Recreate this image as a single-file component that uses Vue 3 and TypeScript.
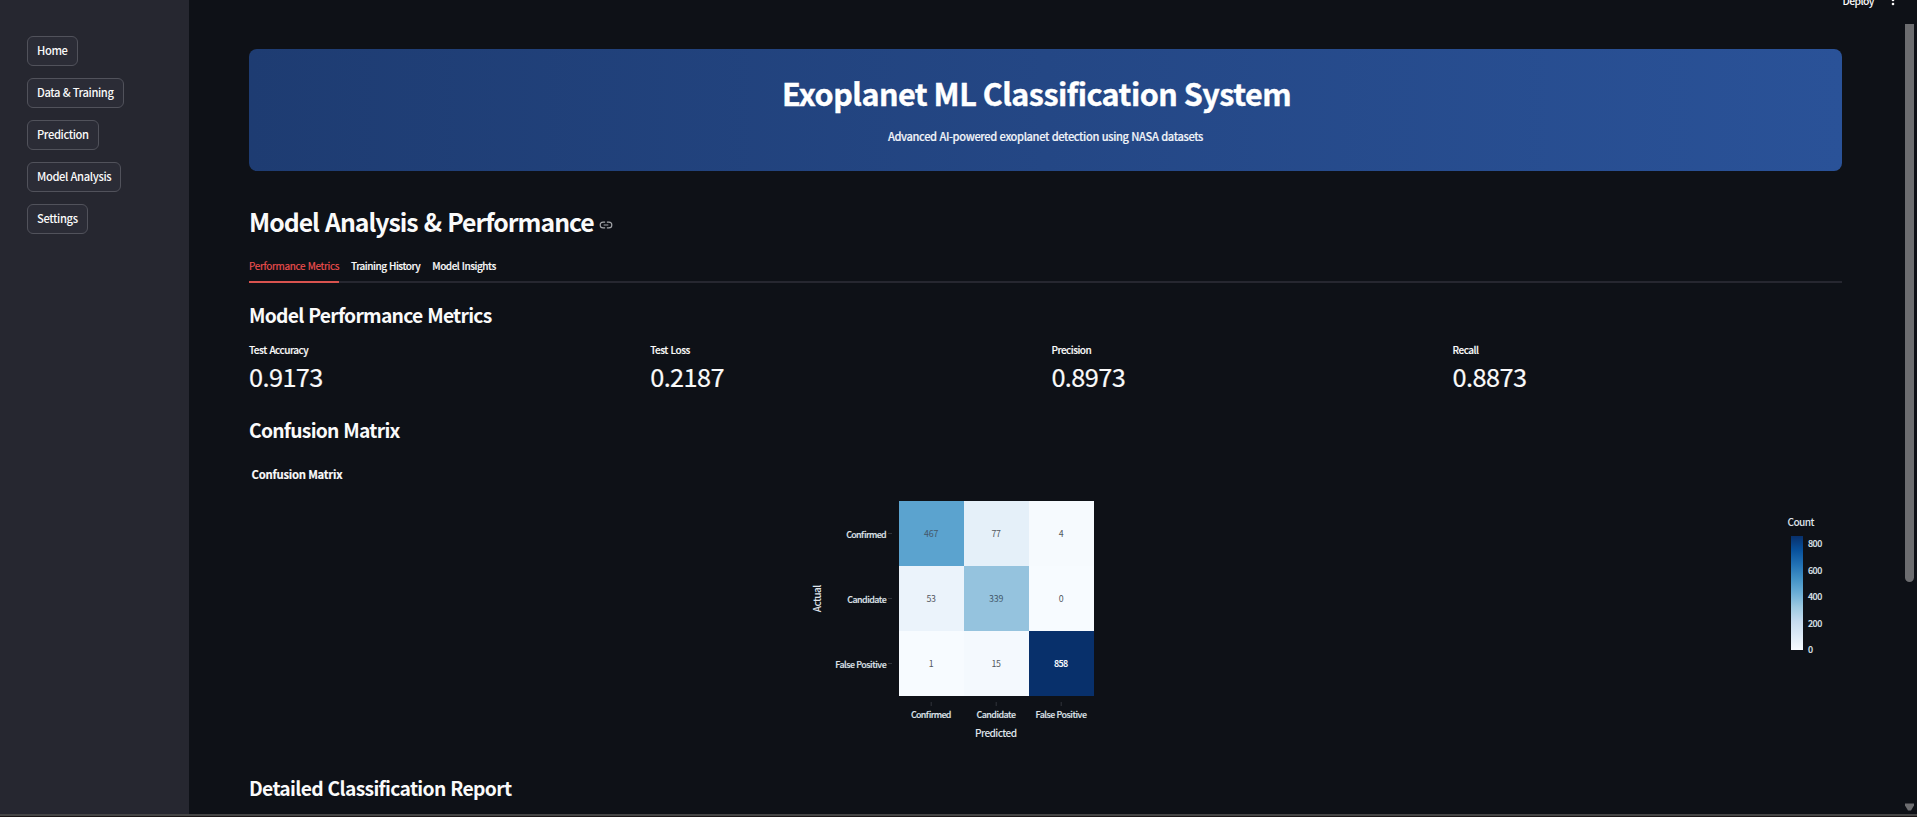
<script setup lang="ts">
interface Metric { label: string; value: string }
interface Cell { value: number; fill: string; ink: string }

const navItems: string[] = ['Home', 'Data & Training', 'Prediction', 'Model Analysis', 'Settings']
const tabs: string[] = ['Performance Metrics', 'Training History', 'Model Insights']

const metrics: Metric[] = [
  { label: 'Test Accuracy', value: '0.9173' },
  { label: 'Test Loss', value: '0.2187' },
  { label: 'Precision', value: '0.8973' },
  { label: 'Recall', value: '0.8873' },
]

const classes = [
  { name: 'Confirmed', width: 40.5 },
  { name: 'Candidate', width: 39.5 },
  { name: 'False Positive', width: 51.5 },
]

const matrix: Cell[][] = [
  [
    { value: 467, fill: '#5ba3cf', ink: '#44586a' },
    { value: 77, fill: '#e5f0f9', ink: '#53585f' },
    { value: 4, fill: '#f6fafe', ink: '#53585f' },
  ],
  [
    { value: 53, fill: '#ebf3fb', ink: '#53585f' },
    { value: 339, fill: '#95c3de', ink: '#44586a' },
    { value: 0, fill: '#f7fbff', ink: '#53585f' },
  ],
  [
    { value: 1, fill: '#f7fbff', ink: '#53585f' },
    { value: 15, fill: '#f4f9fe', ink: '#53585f' },
    { value: 858, fill: '#08306b', ink: '#f2f5fa' },
  ],
]

const blues: string[] = ['#08306b', '#08519c', '#2171b5', '#4292c6', '#6baed6', '#9ecae1', '#c6dbef', '#deebf7', '#f7fbff']
const ticks: number[] = [800, 600, 400, 200, 0]

const left = 898.7
const top = 501
const cell = 65
const center = (i: number): number => (i + 0.5) * cell
const digits = (n: number): number => String(n).length * 4.75
</script>

<template>
  <div class="app">
    <div class="body">
      <aside class="sidebar">
        <button v-for="item in navItems" :key="item" class="nav">{{ item }}</button>
      </aside>

      <main class="main">
        <section class="banner">
          <h1>Exoplanet ML Classification System</h1>
          <p>Advanced AI-powered exoplanet detection using NASA datasets</p>
        </section>

        <div class="heading">
          <h2>Model Analysis &amp; Performance</h2>
          <svg class="link" width="14" height="14" viewBox="0 0 24 24" fill="none" stroke="#a3a5a9" stroke-width="2">
            <path d="M10.500 7H7a5 5 0 0 0 0 10h3.500M13.500 7H17a5 5 0 0 1 0 10h-3.500M8 12h8" />
          </svg>
        </div>

        <nav class="tabs">
          <span v-for="(tab, i) in tabs" :key="tab" class="tab" :class="{ active: i === 0 }">{{ tab }}</span>
        </nav>

        <h3 class="first">Model Performance Metrics</h3>
        <div class="metrics">
          <div v-for="m in metrics" :key="m.label">
            <div class="label">{{ m.label }}</div>
            <div class="value">{{ m.value }}</div>
          </div>
        </div>

        <h3 class="second">Confusion Matrix</h3>
        <svg class="chart" width="1593" height="330" viewBox="249 444 1593 330">
          <defs>
            <linearGradient id="blues" x1="0" y1="0" x2="0" y2="1">
              <stop v-for="(c, i) in blues" :key="c" :offset="i / 8" :stop-color="c" />
            </linearGradient>
          </defs>
          <text class="title" x="251.500" y="479" textLength="91">Confusion Matrix</text>

          <g v-for="(row, r) in matrix" :key="r">
            <g v-for="(c, k) in row" :key="k">
              <rect :x="left + k * cell" :y="top + r * cell" :width="cell" :height="cell" :fill="c.fill" shape-rendering="crispEdges" />
              <text
                class="num" :class="{ strong: c.value === 858 }" :fill="c.ink" text-anchor="middle"
                :x="left + center(k)" :y="top + center(r) + 3.2" :textLength="digits(c.value)"
              >{{ c.value }}</text>
            </g>
          </g>

          <g v-for="(c, i) in classes" :key="c.name">
            <text class="axis" text-anchor="end" x="886.700" :y="top + center(i) + 4.1" :textLength="c.width">{{ c.name }}</text>
            <text class="axis" text-anchor="middle" :x="left + center(i)" y="717.500" :textLength="c.width">{{ c.name }}</text>
            <path class="tick" :d="`M888 ${top + center(i)}h4M${left + center(i)} 702v4`" />
          </g>
          <text class="name" text-anchor="middle" x="996" y="736.500" textLength="42">Predicted</text>
          <text class="name" text-anchor="middle" transform="translate(820.500 598.500) rotate(-90)" textLength="27.500">Actual</text>

          <text class="name" x="1787.500" y="525.500" textLength="27">Count</text>
          <rect x="1791" y="536" width="12" height="114" fill="url(#blues)" />
          <text v-for="(t, i) in ticks" :key="t" class="axis" x="1808" :y="547 + i * 26.5" :textLength="digits(t)">{{ t }}</text>
        </svg>

        <h3 class="report">Detailed Classification Report</h3>
      </main>

      <div class="toolbar">
        <span>Deploy</span>
        <svg width="4" height="12" viewBox="0 0 4 12" fill="#fafafa">
          <circle cx="2" cy="2" r="1.300" /><circle cx="2" cy="6" r="1.300" /><circle cx="2" cy="10" r="1.300" />
        </svg>
      </div>
      <div class="thumb"></div>
      <svg class="arrow" width="10" height="8" viewBox="0 0 10 8"><path d="M0 .5h9v2L6 7.500H3L0 2.500z" fill="#6c6d70" /></svg>
    </div>
    <div class="edge"></div>
  </div>
</template>

<style>
body { background: #0e1117; overflow: hidden; }
</style>

<style scoped>
.app {
  display: flex;
  flex-direction: column;
  width: 1917px;
  height: 817px;
  overflow: hidden;
  background: #0e1117;
  color: #fafafa;
  font-family: "Noto Sans CJK SC", "Noto Sans", sans-serif;
}
.body { position: relative; display: flex; height: 814px; overflow: hidden; }
.sidebar {
  box-sizing: border-box;
  flex: none;
  display: flex;
  flex-direction: column;
  align-items: flex-start;
  gap: 12px;
  width: 189px;
  padding: 36px 27px 0;
  background: #262730;
}
.nav {
  box-sizing: border-box;
  height: 30px;
  padding: 0 9px 2px 9px;
  border: 1px solid #51525b;
  border-radius: 6px;
  background: #2b2c36;
  color: #fafafa;
  font: 500 11.2px/26px "Noto Sans CJK SC", "Noto Sans", sans-serif;
  letter-spacing: -0.38px;
  word-spacing: 0.4px;
  white-space: nowrap;
}
.main { width: 1593px; padding: 49px 0 0 60px; white-space: nowrap; }
h1, h2, h3, p { margin: 0; }
.banner {
  box-sizing: border-box;
  height: 122px;
  padding-top: 24px;
  border-radius: 8px;
  background: linear-gradient(90deg, #1e3c72 0%, #2a5298 100%);
  text-align: center;
}
h1 { padding-right: 18px; font-size: 30.5px; line-height: 40px; letter-spacing: -0.5px; color: #fff; -webkit-text-stroke: 0.4px #fff; }
.banner p { margin-top: 13px; font-size: 11.1px; font-weight: 500; line-height: 20px; letter-spacing: -0.37px; word-spacing: 0.6px; color: #f1f4f9; -webkit-text-stroke: 0.15px #f1f4f9; }
.heading { display: flex; align-items: center; gap: 5px; height: 36px; margin-top: 32px; }
h2 { font-size: 24.8px; line-height: 36px; letter-spacing: -1px; word-spacing: 1.5px; }
.link { margin-top: 7px; }
.tabs {
  box-sizing: border-box;
  display: flex;
  gap: 12px;
  height: 27px;
  margin-top: 17px;
  border-bottom: 2px solid #262730;
}
.tab { height: 25px; font-size: 10px; font-weight: 500; line-height: 20px; letter-spacing: -0.46px; word-spacing: 0.6px; -webkit-text-stroke: 0.15px; }
.tab.active { font-weight: 400; letter-spacing: -0.34px; color: #f0504f; border-bottom: 2px solid #d9534f; }
h3 { font-size: 19.3px; line-height: 28px; letter-spacing: -0.74px; word-spacing: 1px; }
.report { letter-spacing: -0.68px; }
.first { margin-top: 18px; }
.second { margin-top: 23px; }
.metrics { display: grid; grid-template-columns: repeat(4, 389.2px); column-gap: 12px; margin-top: 13px; }
.label { font-size: 10px; font-weight: 500; line-height: 16px; letter-spacing: -0.48px; word-spacing: 1px; -webkit-text-stroke: 0.15px; }
.value { height: 35px; font-size: 25.3px; line-height: 36px; letter-spacing: -0.57px; -webkit-text-stroke: 0.2px; }
.chart { display: block; }
.title { font-size: 11.3px; font-weight: 700; fill: #fafafa; stroke: #fafafa; stroke-width: 0.15px; }
.num { font-size: 8.8px; }
.strong { font-weight: 700; }
.axis { font-size: 8.9px; font-weight: 500; fill: #dfe3ea; stroke: #dfe3ea; stroke-width: 0.15px; }
.name { font-size: 10.1px; font-weight: 500; fill: #dfe3ea; }
.tick { stroke: #30343b; stroke-width: 1; }
.toolbar { position: absolute; top: -8px; left: 1842.5px; display: flex; gap: 17px; font-size: 10.4px; font-weight: 500; line-height: 18px; letter-spacing: -0.55px; }
.toolbar svg { margin-top: 2px; }
.thumb { position: absolute; top: 24px; left: 1905px; width: 9px; height: 558px; border-radius: 0 0 5px 5px; background: #6c6d70; }
.arrow { position: absolute; left: 1905px; top: 803px; }
.edge { height: 2px; border-bottom: 1px solid #1b1617; background: #454545; }
</style>
